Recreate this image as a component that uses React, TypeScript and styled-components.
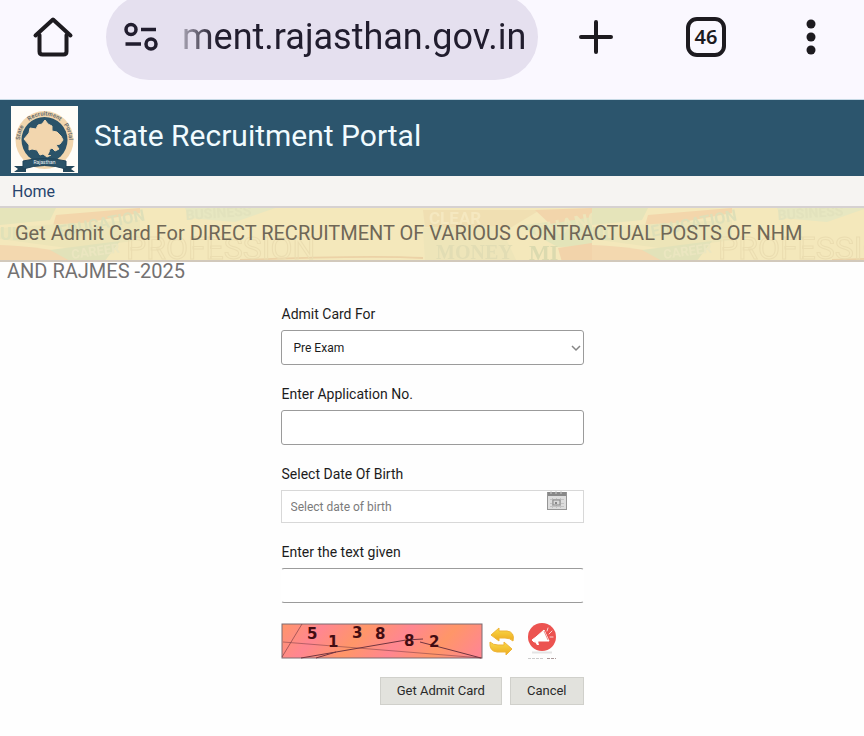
import React from 'react';
import styled, { createGlobalStyle } from 'styled-components';

const GlobalStyle = createGlobalStyle`
  *, *::before, *::after { box-sizing: border-box; }
  body {
    margin: 0;
    background: #fefefe;
    color: #1c1c1c;
    font-family: Roboto, "Liberation Sans", sans-serif;
  }
  button, input, select { font-family: inherit; }
`;

const BrowserBar = styled.header`
  padding-bottom: 25px;
  overflow: hidden;
  background: #faf8ff;
  border-bottom: 1px solid #c5d9e5;
`;

const BrowserRow = styled.div`
  display: flex;
  align-items: center;
  height: 74px;
`;

const BarButton = styled.button<{ $width: number }>`
  display: flex;
  align-items: center;
  justify-content: center;
  flex: none;
  width: ${(p) => p.$width}px;
  height: 60px;
  padding: 0;
  border: 0;
  background: none;
  color: #1d1b20;
`;

const AddressPill = styled.div`
  display: flex;
  align-items: center;
  flex: 1;
  min-width: 0;
  height: 86px;
  padding: 0 12px 0 17px;
  border-radius: 43px;
  background: #e5e0ef;
  gap: 23px;
  svg { flex: none; }
`;

const AddressInput = styled.input`
  flex: 1;
  min-width: 0;
  height: 54px;
  padding: 0;
  border: 0;
  outline: 0;
  background: none;
  color: #211d2e;
  font-size: 36px;
  mask-image: linear-gradient(to right, rgba(0, 0, 0, 0.3), #000 32px);
`;

const PortalHeader = styled.div`
  display: flex;
  align-items: flex-start;
  gap: 16px;
  height: 76px;
  padding: 6px 11px 3px;
  background: #2c556d;
`;

const PortalTitle = styled.h1`
  margin: 10px 0 0;
  color: #f1fbff;
  font-size: 30px;
  font-weight: 400;
  line-height: 40px;
`;

const Nav = styled.nav`
  display: flex;
  padding: 2px 12px 0;
  background: #f6f4f2;
  border-bottom: 2px solid #d6d1d1;
`;

const NavLink = styled.a`
  color: #27446d;
  font-size: 16px;
  line-height: 28px;
  text-decoration: none;
`;

const Banner = styled.section`
  position: relative;
  padding: 6px 7px 0;
`;

const BannerArt = styled.svg`
  position: absolute;
  top: 0;
  left: 0;
  width: 100%;
  height: 54px;
  border-bottom: 2px solid #d2c9bc;
`;

const BannerTitle = styled.h2`
  position: relative;
  margin: 0;
  color: #6f6757;
  font-size: 20px;
  font-weight: 400;
  line-height: 38px;
  text-indent: 8px;
`;

const SecondLine = styled.span`
  display: block;
  color: #747171;
  text-indent: 0;
`;

const Form = styled.form`
  display: flex;
  flex-direction: column;
  width: 100%;
  max-width: 303px;
  margin: 15px auto 0;
  padding-bottom: 30px;
`;

const Field = styled.div`
  display: flex;
  flex-direction: column;
  margin-bottom: 20px;
`;

const Label = styled.label`
  padding: 0 1px 7px;
  font-size: 14px;
  line-height: 18px;
`;

const Control = styled.div`
  position: relative;
  display: flex;
`;

const Select = styled.select`
  appearance: none;
  width: 100%;
  height: 35px;
  padding: 0 12px;
  border: 1px solid #9b9b9b;
  border-radius: 3px;
  background: #fff;
  color: #1c1c1c;
  font-size: 12px;
`;

const Chevron = styled.svg`
  position: absolute;
  top: 14px;
  right: 3px;
  pointer-events: none;
`;

const TextInput = styled.input<{ $variant?: 'pale' | 'open' }>`
  width: 100%;
  height: ${(p) => (p.$variant === 'pale' ? 33 : 35)}px;
  padding: 0 9px;
  border: 1px solid ${(p) => (p.$variant === 'pale' ? '#d8d8d8' : '#9b9b9b')};
  border-radius: ${(p) => (p.$variant === 'pale' ? 0 : 3)}px;
  ${(p) => p.$variant === 'open' && 'border-left-color: transparent; border-right-color: transparent;'}
  background: #fff;
  color: #1c1c1c;
  font-size: 12px;
  &::placeholder { color: #7b7b7b; opacity: 1; }
`;

const CalendarButton = styled.button`
  position: absolute;
  top: 1px;
  right: 17px;
  display: flex;
  padding: 0;
  border: 0;
  background: none;
`;

const CaptchaRow = styled.div`
  display: flex;
  align-items: flex-start;
  height: 40px;
  margin-bottom: 14px;
`;

const CaptchaImage = styled.svg`
  flex: none;
  margin-right: 6px;
`;

const IconButton = styled.button`
  display: flex;
  flex: none;
  margin-right: 12px;
  padding: 0;
  border: 0;
  background: none;
`;

const Actions = styled.div`
  display: flex;
  justify-content: flex-end;
  gap: 8px;
`;

const ActionButton = styled.button`
  height: 28px;
  padding: 0 16px 2px;
  border: 1px solid #d0d0cb;
  border-radius: 0;
  background: #e2e2dd;
  color: #2a2a2a;
  font-size: 13px;
`;

const HomeIcon = () => (
  <svg width="42" height="42" viewBox="0 0 42 42" fill="none" stroke="currentColor" strokeWidth="4" strokeLinecap="round" strokeLinejoin="round">
    <path d="M3.500 19.500 L21 3.500 L38.500 19.500" />
    <path d="M7.500 19 V35.500 Q7.500 38.500 10.500 38.500 H31.500 Q34.500 38.500 34.500 35.500 V19" />
  </svg>
);

const SiteControlsIcon = () => (
  <svg width="36" height="30" viewBox="0 0 36 30" fill="none" stroke="#211d2e" strokeWidth="3.500">
    <circle cx="8" cy="7.500" r="5" />
    <path d="M18 7.500 H33 M2.500 22 H18" />
    <circle cx="28" cy="22" r="5" />
  </svg>
);

const Emblem = () => (
  <svg width="67" height="67" viewBox="0 0 67 67" role="img" aria-label="State Recruitment Portal Rajasthan">
    <defs>
      <path id="ring" d="M9 34 A24.500 24.500 0 0 1 58 34" />
    </defs>
    <rect width="67" height="67" fill="#fffdf8" />
    <circle cx="33.500" cy="34" r="29" fill="#f2d6ae" />
    <circle cx="33.500" cy="34" r="23" fill="#2b5369" />
    <path d="M13 33 L18 27 L19 22 L25 23 L27 19 L31 18 L34 14 L37 18 L41 20 L41 25 L46 26 L50 30 L52 34 L49 38 L45 39 L48 43 L44 45 L41 42 L38 44 L40 49 L36 51 L32 48 L29 49 L26 44 L21 43 L18 44 L18 39 Z" fill="#f2d6ae" stroke="#f2d6ae" strokeLinejoin="round" />
    <path d="M39 45 L42 46 L41 49 L37 49 Z" fill="#2b5369" />
    <g fontSize="6" fontWeight="700" fill="#6a6f70" fontFamily="Roboto, sans-serif">
      <text><textPath href="#ring" startOffset="0">State</textPath></text>
      <text><textPath href="#ring" startOffset="50%" textAnchor="middle">Recruitment</textPath></text>
      <text><textPath href="#ring" startOffset="100%" textAnchor="end">Portal</textPath></text>
    </g>
    <path d="M3 60 H15 V66 H3 L7 63 Z M52 60 H64 L60 63 L64 66 H52 Z" fill="#24475b" />
    <path d="M12 55 Q33.500 50 55 55 V63 Q33.500 56 12 63 Z" fill="#2b5369" stroke="#20445a" />
    <text x="33.500" y="58" textAnchor="middle" fontSize="5" fill="#e7edf0" fontFamily="Roboto, sans-serif">Rajasthan</text>
  </svg>
);

const BannerPattern = () => (
  <BannerArt aria-hidden="true">
    <defs>
      <pattern id="words" width="592" height="54" patternUnits="userSpaceOnUse">
        <rect width="592" height="54" fill="#f4e8bb" />
        <path d="M0 0 H56 L50 12 L0 17 Z" fill="#e5e4ba" />
        <path d="M56 7 L140 0 V5 L52 21 Z" fill="#f3d6ab" />
        <path d="M0 20 L60 16 L140 12 V32 L75 41 L0 31 Z" fill="#ede5b8" />
        <path d="M0 37 Q40 38 92 50 L72 54 H0 Z" fill="#f3d8af" />
        <path d="M50 42 L120 33 L104 54 H72 Z" fill="#e2e2b9" />
        <path d="M185 0 H275 L235 14 L190 10 Z" fill="#e7e7c1" />
        <path d="M423 2 H540 L510 20 L425 19 Z" fill="#f0dfb2" />
        <path d="M423 20 L500 18 L516 52 H425 Z" fill="#eee5b9" />
        <path d="M518 18 L592 8 V38 L558 39 Z" fill="#e3e4b9" />
        <path d="M558 40 L592 35 V54 H562 Z" fill="#f2d3aa" />
        <path d="M535 2 L592 0 V9 L550 16 Z" fill="#f2d5ab" />
        <path d="M240 52 Q370 47 423 50" fill="none" stroke="#ecd2a6" strokeWidth="2" />
        <g fontFamily="Roboto, sans-serif" fontWeight="700">
          <text x="60" y="29" fontSize="16" fill="#dedfb8" transform="rotate(-11 60 29)">EDUCATION</text>
          <text x="72" y="51" fontSize="13" fill="#ebe6c0" transform="rotate(-8 72 51)">CAREER</text>
          <text x="0" y="32" fontSize="18" fill="#e0e1b8">UL</text>
          <text x="126" y="51" fontSize="32" fontWeight="400" fill="none" stroke="#ebddb0">PROFESSION</text>
          <text x="429" y="16" fontSize="17" fill="#f5e8c0">CLEAR</text>
          <text x="436" y="51" fontSize="20" fontFamily="Liberation Serif, serif" fill="#e2ddb4">MONEY</text>
          <text x="529" y="52" fontSize="22" fontFamily="Liberation Serif, serif" fill="#dbdaaf">MI</text>
          <text x="536" y="31" fontSize="20" fill="#ede5ba" transform="rotate(-12 536 31)">CHANGE</text>
          <text x="186" y="12" fontSize="14" fill="#e2e2bd" transform="rotate(-4 186 12)">BUSINESS</text>
        </g>
      </pattern>
    </defs>
    <rect width="100%" height="54" fill="url(#words)" />
  </BannerArt>
);

const CalendarIcon = () => (
  <svg width="20" height="20" viewBox="0 0 20 20">
    <rect x="0.500" y="1.500" width="19" height="17" fill="#ddd" stroke="#969696" />
    <path d="M1 1 H19 V5 H1 Z" fill="#888" />
    <path d="M4 0 V3 M9 0 V3 M14 0 V3" stroke="#ccc" />
    <path d="M3 8.500 H17 M3 12.500 H17 M3 15.500 H17 M5.500 7 V17 M9.500 7 V17 M13.500 7 V17" stroke="#c2c2c2" />
    <rect x="6" y="9" width="7" height="5" fill="#d8d8d8" stroke="#888" />
    <rect x="8" y="11" width="2" height="2" fill="#888" />
  </svg>
);

const digits: [string, number, number][] = [
  ['5', 26, 16],
  ['1', 47, 24],
  ['3', 71, 15],
  ['8', 94, 16],
  ['8', 123, 23],
  ['2', 148, 24],
];

const Captcha = () => (
  <CaptchaImage width="202" height="36" viewBox="0 0 202 36" role="img" aria-label="Captcha">
    <defs>
      <linearGradient id="peach" x1="0" y1="0" x2="26" y2="22" gradientUnits="userSpaceOnUse" spreadMethod="reflect">
        <stop offset="0" stopColor="#ff9668" />
        <stop offset="1" stopColor="#ff8691" />
      </linearGradient>
    </defs>
    <rect x="1" y="1" width="200" height="34" fill="url(#peach)" stroke="#7d6a70" />
    <g fill="none" stroke="#723540">
      <path d="M1 34 L21 1" strokeOpacity="0.600" />
      <path d="M2 19 L201 35" strokeOpacity="0.500" />
      <path d="M20 35 L125 17 L142 16" />
      <path d="M35 35 L55 29" />
      <path d="M139 19 L166 26 L200 35" />
    </g>
    <g fontFamily="Verdana, DejaVu Sans, sans-serif" fontWeight="700" fontSize="15" fill="#430c12">
      {digits.map(([d, x, y]) => (
        <text key={x} x={x} y={y}>{d}</text>
      ))}
    </g>
  </CaptchaImage>
);

const RefreshIcon = () => (
  <svg width="26" height="38" viewBox="0 0 26 38">
    <defs>
      <linearGradient id="gold" x1="0" y1="0" x2="0" y2="1">
        <stop offset="0" stopColor="#f9da48" />
        <stop offset="1" stopColor="#edaa20" />
      </linearGradient>
    </defs>
    <path d="M2 12 L10 5 V8 H18 Q26 9 24 18 Q21 15 16 15 H10 V18 Z" fill="url(#gold)" stroke="#eeb438" strokeLinejoin="round" />
    <path d="M1 19 Q4 22 9 22 H15 V19 L23 26 L17 32 V29 H8 Q0 28 1 19 Z" fill="url(#gold)" stroke="#eeb438" strokeLinejoin="round" />
  </svg>
);

const AnnounceIcon = () => (
  <svg width="30" height="38" viewBox="0 0 30 38">
    <circle cx="15" cy="14" r="14" fill="#ec5350" />
    <path d="M5 17 L9 14 L17 7 L22 18 L12 18 L7 19 Z" fill="#fff" stroke="#fff" strokeLinejoin="round" />
    <path d="M8 19 L10 22 H12 L11 18 Z" fill="#fff" />
    <path d="M17 8 L21 17" stroke="#ec8c89" />
    <path d="M20 8 L21 5 M22 11 L25 8 M23 14 H26" stroke="#fbd5d3" strokeLinecap="round" />
    <path d="M5 29.500 H25" stroke="#e4e4e4" strokeWidth="2" />
    <path d="M1 35.500 H17" stroke="#ccc" strokeDasharray="3 1" />
    <path d="M20 35.500 H29" stroke="#a99" strokeDasharray="3 1" />
  </svg>
);

export default function App() {
  return (
    <>
      <GlobalStyle />
      <BrowserBar>
        <BrowserRow>
          <BarButton $width={106} aria-label="Home page"><HomeIcon /></BarButton>
          <AddressPill>
            <SiteControlsIcon />
            <AddressInput aria-label="Address" defaultValue="ment.rajasthan.gov.in" />
          </AddressPill>
          <BarButton $width={116} aria-label="New tab">
            <svg width="36" height="36" viewBox="0 0 36 36" stroke="currentColor" strokeWidth="4" strokeLinecap="round">
              <path d="M18 3 V33 M3 18 H33" />
            </svg>
          </BarButton>
          <BarButton $width={104} aria-label="46 open tabs">
            <svg width="42" height="42" viewBox="0 0 42 42">
              <rect x="3" y="3" width="36" height="36" rx="9" fill="none" stroke="currentColor" strokeWidth="4" />
              <text x="21" y="28" textAnchor="middle" fontFamily="Noto Sans, sans-serif" fontWeight="600" fontSize="20" fill="currentColor">46</text>
            </svg>
          </BarButton>
          <BarButton $width={106} aria-label="Menu">
            <svg width="12" height="38" viewBox="0 0 12 38" fill="currentColor">
              <circle cx="6" cy="6" r="4.500" />
              <circle cx="6" cy="19" r="4.500" />
              <circle cx="6" cy="32" r="4.500" />
            </svg>
          </BarButton>
        </BrowserRow>
      </BrowserBar>
      <PortalHeader>
        <Emblem />
        <PortalTitle>State Recruitment Portal</PortalTitle>
      </PortalHeader>
      <Nav><NavLink href="#home">Home</NavLink></Nav>
      <main>
        <Banner>
          <BannerPattern />
          <BannerTitle>
            Get Admit Card For DIRECT RECRUITMENT OF VARIOUS CONTRACTUAL POSTS OF NHM{' '}
            <SecondLine>AND RAJMES -2025</SecondLine>
          </BannerTitle>
        </Banner>
        <Form onSubmit={(e) => e.preventDefault()}>
          <Field>
            <Label htmlFor="exam">Admit Card For</Label>
            <Control>
              <Select id="exam"><option>Pre Exam</option></Select>
              <Chevron width="10" height="8" viewBox="0 0 10 8" fill="none" stroke="#858585" strokeWidth="1.500">
                <path d="M1 2 L5 6 L9 2" />
              </Chevron>
            </Control>
          </Field>
          <Field>
            <Label htmlFor="application">Enter Application No.</Label>
            <TextInput id="application" />
          </Field>
          <Field>
            <Label htmlFor="birth">Select Date Of Birth</Label>
            <Control>
              <TextInput id="birth" $variant="pale" placeholder="Select date of birth" />
              <CalendarButton type="button" aria-label="Open calendar"><CalendarIcon /></CalendarButton>
            </Control>
          </Field>
          <Field>
            <Label htmlFor="captcha">Enter the text given</Label>
            <TextInput id="captcha" $variant="open" />
          </Field>
          <CaptchaRow>
            <Captcha />
            <IconButton type="button" aria-label="Refresh captcha"><RefreshIcon /></IconButton>
            <IconButton type="button" aria-label="Read captcha aloud"><AnnounceIcon /></IconButton>
          </CaptchaRow>
          <Actions>
            <ActionButton type="submit">Get Admit Card</ActionButton>
            <ActionButton type="button">Cancel</ActionButton>
          </Actions>
        </Form>
      </main>
    </>
  );
}
